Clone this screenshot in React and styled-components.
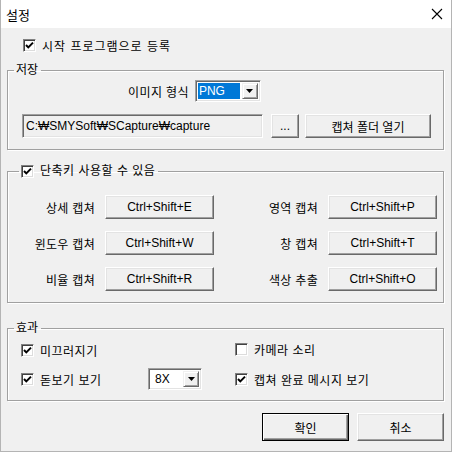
import React from "react"
import styled, { createGlobalStyle } from "styled-components"

const GlobalStyle = createGlobalStyle`
  body {
    margin: 0;
    font-family: "Liberation Sans", "Noto Sans CJK KR", sans-serif;
    font-size: 12px;
    color: #000;
  }
`

const Window = styled.div`
  width: 452px;
  height: 452px;
  box-sizing: border-box;
  border: 1px solid #b4b4b4;
  border-top: none;
  background: #f0f0f0;
  display: flex;
  flex-direction: column;
`

const TitleBar = styled.div`
  height: 28px;
  flex: none;
  background: #fff;
  display: flex;
  align-items: center;
  justify-content: space-between;
  padding: 0 8px 0 5px;
`

const Title = styled.span`
  font-family: "Noto Sans CJK KR", sans-serif;
  font-size: 13px;
`

const Content = styled.div`
  display: flex;
  flex-direction: column;
  padding: 0 7px 0 6px;
`

const CheckLabel = styled.label`
  display: inline-flex;
  align-items: center;
  gap: 6px;
  height: 16px;
  margin-left: ${(p) => p.$indent || 0}px;
  margin-top: ${(p) => p.$top || 0}px;
  white-space: nowrap;
  letter-spacing: ${(p) => p.$spacing || 0}px;
`

const Box = styled.span`
  width: 13px;
  height: 13px;
  box-sizing: border-box;
  flex: none;
  background: #fff;
  border: 1px solid;
  border-color: #808080 #fff #fff #808080;
  box-shadow: inset 1px 1px 0 #404040, inset -1px -1px 0 #dcdcdc;
  display: flex;
  align-items: center;
  justify-content: center;
`

const Group = styled.fieldset`
  margin: ${(p) => p.$top || 0}px 0 0 0;
  padding: ${(p) => p.$pad || "0"};
  border: 1px solid #a0a0a0;
  box-shadow: inset 1px 1px 0 #fff, 1px 1px 0 #fff;
  min-width: 0;
`

const Legend = styled.legend`
  margin-left: ${(p) => p.$ml || 6}px;
  padding: 0 3px 0 2px;
  line-height: ${(p) => p.$h || 14}px;
  display: flex;
  align-items: center;
`

const FormatRow = styled.div`
  display: flex;
  align-items: center;
  gap: 6px;
  margin-top: 3px;
  padding-left: 120px;
  letter-spacing: 0.4px;
`

const Combo = styled.div`
  width: ${(p) => p.$w}px;
  height: 22px;
  box-sizing: border-box;
  background: #fff;
  border: 1px solid;
  border-color: #a0a0a0 #fff #fff #a0a0a0;
  box-shadow: inset 1px 1px 0 #696969, inset -1px -1px 0 #e3e3e3;
  display: flex;
  align-items: stretch;
  padding: 2px;
  letter-spacing: 0;
`

const ComboText = styled.span`
  flex: 1;
  display: flex;
  align-items: center;
  padding-left: ${(p) => (p.$selected ? 1 : 4)}px;
  margin-right: 2px;
  background: ${(p) => (p.$selected ? "#0078d7" : "transparent")};
  color: ${(p) => (p.$selected ? "#fff" : "#000")};
`

const DropButton = styled.span`
  width: 16px;
  flex: none;
  box-sizing: border-box;
  background: #f0f0f0;
  border: 1px solid;
  border-color: #f0f0f0 #696969 #696969 #f0f0f0;
  box-shadow: inset 1px 1px 0 #fff, inset -1px -1px 0 #a0a0a0;
  display: flex;
  align-items: center;
  justify-content: center;
`

const PathRow = styled.div`
  display: flex;
  align-items: center;
  margin-top: 12px;
  padding-left: 14px;
  gap: 8px;
`

const Field = styled.div`
  width: 241px;
  height: 24px;
  box-sizing: border-box;
  border: 1px solid;
  border-color: #a0a0a0 #fff #fff #a0a0a0;
  box-shadow: inset 1px 1px 0 #696969, inset -1px -1px 0 #e3e3e3;
  display: flex;
  align-items: center;
  padding-left: 3px;
  white-space: nowrap;
`

const Button = styled.button`
  width: ${(p) => p.$w}px;
  height: ${(p) => p.$h || 24}px;
  margin-left: ${(p) => p.$ml || 0}px;
  box-sizing: border-box;
  padding: 0;
  font: inherit;
  color: #000;
  background: #f0f0f0;
  border: 1px solid;
  border-color: ${(p) => (p.$default ? "#000" : "#fff #696969 #696969 #fff")};
  box-shadow: ${(p) =>
    p.$default
      ? "inset 1px 1px 0 #fff, inset -1px -1px 0 #696969, inset -2px -2px 0 #a0a0a0"
      : "inset -1px -1px 0 #a0a0a0, inset 1px 1px 0 #e3e3e3"};
  white-space: nowrap;
`

const HotkeyGrid = styled.div`
  display: grid;
  grid-template-columns: 87px 109px 94px 109px;
  column-gap: 10px;
  row-gap: 12px;
  margin-top: 16px;
  align-items: center;
`

const KeyLabel = styled.span`
  text-align: right;
  white-space: nowrap;
  letter-spacing: 0.3px;
`

const EffectGrid = styled.div`
  display: grid;
  grid-template-columns: 127px 54px 33px 1fr;
  grid-template-rows: 16px 22px;
  row-gap: 10px;
  margin-top: 7px;
  padding-left: 13px;
  align-items: center;
`

const Cell = styled.div`
  grid-column: ${(p) => p.$col};
`

const Footer = styled.div`
  display: flex;
  justify-content: flex-end;
  gap: 8px;
  margin-top: 12px;
`

const Mark = () => (
  <svg width="9" height="9" viewBox="0 0 9 9">
    <path d="M1 4 L3.3 6.4 L8 1.6" fill="none" stroke="#000" strokeWidth="2" />
  </svg>
)

const Check = ({ checked, children, ...rest }) => (
  <CheckLabel {...rest}>
    <Box>{checked && <Mark />}</Box>
    <span>{children}</span>
  </CheckLabel>
)

const Arrow = () => (
  <svg width="7" height="4" viewBox="0 0 7 4">
    <path d="M0 0 H7 L3.5 4 Z" fill="#000" />
  </svg>
)

const Close = () => (
  <svg width="12" height="12" viewBox="0 0 12 12">
    <path d="M1 1 L11 11 M11 1 L1 11" stroke="#000" strokeWidth="1.1" />
  </svg>
)

const hotkeys = [
  ["상세 캡쳐", "Ctrl+Shift+E", "영역 캡쳐", "Ctrl+Shift+P"],
  ["윈도우 캡쳐", "Ctrl+Shift+W", "창 캡쳐", "Ctrl+Shift+T"],
  ["비율 캡쳐", "Ctrl+Shift+R", "색상 추출", "Ctrl+Shift+O"],
]

export default function App() {
  return (
    <>
      <GlobalStyle />
      <Window>
        <TitleBar>
          <Title>설정</Title>
          <Close />
        </TitleBar>
        <Content>
          <Check checked $indent={16} $top={9} $spacing={1}>
            시작 프로그램으로 등록
          </Check>

          <Group $top={10} $pad="0 0 11px 0">
            <Legend>저장</Legend>
            <FormatRow>
              <span>이미지 형식</span>
              <Combo $w={66}>
                <ComboText $selected>PNG</ComboText>
                <DropButton>
                  <Arrow />
                </DropButton>
              </Combo>
            </FormatRow>
            <PathRow>
              <Field>C:₩SMYSoft₩SCapture₩capture</Field>
              <Button $w={28}>...</Button>
              <Button $w={126} $ml={-2}>캡쳐 폴더 열기</Button>
            </PathRow>
          </Group>

          <Group $top={13} $pad="0 0 11px 0">
            <Legend $h={16} $ml={11}>
              <Check checked $spacing={0.5}>단축키 사용할 수 있음</Check>
            </Legend>
            <HotkeyGrid>
              {hotkeys.map((row) => (
                <React.Fragment key={row[0]}>
                  <KeyLabel>{row[0]}</KeyLabel>
                  <Button $w={109}>{row[1]}</Button>
                  <KeyLabel>{row[2]}</KeyLabel>
                  <Button $w={109}>{row[3]}</Button>
                </React.Fragment>
              ))}
            </HotkeyGrid>
          </Group>

          <Group $top={18} $pad="0 0 10px 0">
            <Legend>효과</Legend>
            <EffectGrid>
              <Cell $col="1 / 4">
                <Check checked $spacing={0.5}>미끄러지기</Check>
              </Cell>
              <Cell $col="4">
                <Check $spacing={0.5}>카메라 소리</Check>
              </Cell>
              <Cell $col="1">
                <Check checked $spacing={0.5}>돋보기 보기</Check>
              </Cell>
              <Cell $col="2">
                <Combo $w={54}>
                  <ComboText>8X</ComboText>
                  <DropButton>
                    <Arrow />
                  </DropButton>
                </Combo>
              </Cell>
              <Cell $col="4">
                <Check checked $spacing={0.5}>캡쳐 완료 메시지 보기</Check>
              </Cell>
            </EffectGrid>
          </Group>

          <Footer>
            <Button $w={87} $h={28} $default>확인</Button>
            <Button $w={87} $h={28}>취소</Button>
          </Footer>
        </Content>
      </Window>
    </>
  )
}
